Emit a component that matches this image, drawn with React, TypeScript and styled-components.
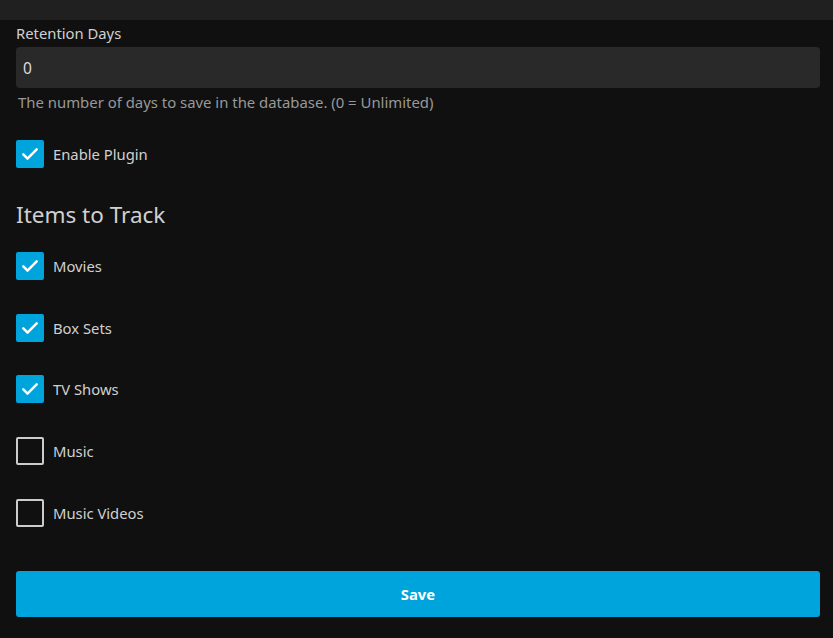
import React, { useState } from "react";
import styled, { createGlobalStyle } from "styled-components";

const Global = createGlobalStyle`
  html, body { margin: 0; padding: 0; background: #101010; }
  body { font-family: "Noto Sans", "Open Sans", sans-serif; color: #d0d0d0; }
  * { box-sizing: border-box; }
`;

const TopBar = styled.div`
  height: 20px;
  background: #202020;
`;

const Content = styled.div`
  padding: 0 13px 21px 16px;
  display: flex;
  flex-direction: column;
`;

const Label = styled.label`
  display: block;
  font-size: 14.8px;
  line-height: 20px;
  color: #d0d0d0;
  margin-top: 3px;
  margin-bottom: 4px;
`;

const Input = styled.input`
  display: block;
  width: 100%;
  height: 41px;
  background: #292929;
  border: none;
  border-radius: 4px;
  color: #ddd;
  font-family: inherit;
  font-size: 15.5px;
  padding: 0 7px;
  outline: none;
`;

const Description = styled.div`
  font-size: 14.9px;
  line-height: 20px;
  color: #999;
  margin-top: 4px;
  margin-left: 2px;
`;

const CheckRow = styled.label<{ $mt: number }>`
  display: flex;
  align-items: center;
  gap: 9px;
  margin-top: ${(p) => p.$mt}px;
  height: 28px;
  font-size: 14.8px;
  color: #d0d0d0;
  cursor: pointer;
`;

const Box = styled.span<{ $checked: boolean }>`
  width: 28px;
  height: 28px;
  flex: none;
  border-radius: 2px;
  display: flex;
  align-items: center;
  justify-content: center;
  background: ${(p) => (p.$checked ? "#00a4dc" : "transparent")};
  border: ${(p) => (p.$checked ? "none" : "2px solid #ccc")};
`;

const Heading = styled.h3`
  margin: 33px 0 0 0;
  font-size: 22.5px;
  font-weight: 400;
  line-height: 28px;
  color: #d0d0d0;
`;

const SaveButton = styled.button`
  margin-top: 44px;
  height: 46px;
  width: 100%;
  border: none;
  border-radius: 3px;
  background: #00a4dc;
  color: #fff;
  font-family: inherit;
  font-size: 14.8px;
  font-weight: 700;
  cursor: pointer;
`;

const Check = () => (
  <svg width="20" height="20" viewBox="0 0 24 24" fill="none" stroke="#fff" strokeWidth="3" strokeLinecap="round" strokeLinejoin="round">
    <path d="M4 12.5l5 5L20 6.5" />
  </svg>
);

type ItemProps = { label: string; checked: boolean; mt: number; onToggle: () => void };
const Item = ({ label, checked, mt, onToggle }: ItemProps) => (
  <CheckRow $mt={mt} onClick={onToggle}>
    <Box $checked={checked}>{checked && <Check />}</Box>
    <span>{label}</span>
  </CheckRow>
);

export default function App() {
  const [state, setState] = useState<Record<string, boolean>>({
    "Enable Plugin": true,
    Movies: true,
    "Box Sets": true,
    "TV Shows": true,
    Music: false,
    "Music Videos": false,
  });
  const toggle = (k: string) => setState((s) => ({ ...s, [k]: !s[k] }));
  const items = ["Movies", "Box Sets", "TV Shows", "Music", "Music Videos"];
  return (
    <>
      <Global />
      <TopBar />
      <Content>
        <Label>Retention Days</Label>
        <Input defaultValue="0" />
        <Description>The number of days to save in the database. (0 = Unlimited)</Description>
        <Item label="Enable Plugin" checked={state["Enable Plugin"]} mt={28} onToggle={() => toggle("Enable Plugin")} />
        <Heading>Items to Track</Heading>
        {items.map((k, i) => (
          <Item key={k} label={k} checked={state[k]} mt={i === 0 ? 23 : 33.7} onToggle={() => toggle(k)} />
        ))}
        <SaveButton>Save</SaveButton>
      </Content>
    </>
  );
}
